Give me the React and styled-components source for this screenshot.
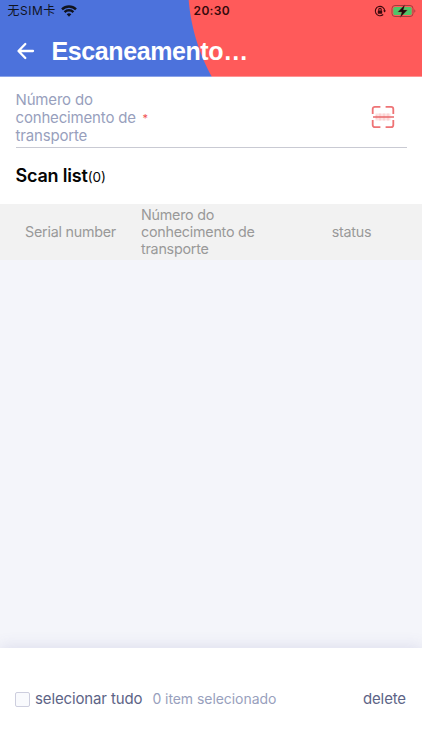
import React from 'react';
import styled, { createGlobalStyle } from 'styled-components';

const GlobalStyle = createGlobalStyle`
  * { box-sizing: border-box; }
  body { margin: 0; font-family: Inter, "Noto Sans CJK SC", sans-serif; }
`;

const Screen = styled.div`
  width: 422px;
  height: 750px;
  display: flex;
  flex-direction: column;
  background: #f4f5fa;
  overflow: hidden;
`;

const Header = styled.header`
  height: 77px;
  flex: none;
  background: radial-gradient(circle 193px at 381px -16px, #ff5a5a 192.5px, #4c72dc 193.5px);
  box-shadow: inset 0 -1px 0 rgba(255, 255, 255, 0.35);
`;

const StatusBar = styled.div`
  height: 22px;
  display: grid;
  grid-template-columns: 1fr auto 1fr;
  align-items: center;
  padding: 0 6px 0 7.5px;
  color: #10131f;
`;

const Carrier = styled.div`
  display: flex;
  align-items: center;
  font-size: 12px;
  line-height: 22px;
  gap: 5px;
  white-space: nowrap;
`;

const CarrierName = styled.span`
  letter-spacing: 0.5px;
`;

const Clock = styled.div`
  font-size: 12px;
  font-weight: 600;
  line-height: 22px;
  letter-spacing: 0.3px;
  color: #35090c;
`;

const Indicators = styled.div`
  display: flex;
  justify-content: flex-end;
  align-items: center;
  gap: 5px;
`;

const TitleBar = styled.div`
  height: 54px;
  display: flex;
  align-items: center;
  padding: 4px 16px 0;
  gap: 15.5px;
`;

const Title = styled.h1`
  margin: 0;
  font: bold 25px/30px "Liberation Sans", sans-serif;
  letter-spacing: -0.4px;
  color: #fff;
`;

const Panel = styled.section`
  height: 127px;
  flex: none;
  padding: 0 15.5px;
  background: #fff;
`;

const Field = styled.div`
  height: 71px;
  display: flex;
  align-items: center;
  justify-content: space-between;
  padding: 11px 11.5px 0 0;
  border-bottom: 1px solid #c9cad3;
`;

const Label = styled.div`
  display: flex;
  align-items: center;
  color: #989fbd;
  font-size: 15px;
  line-height: 18px;
  letter-spacing: -0.17px;
`;

const LabelText = styled.span`
  width: 127px;
  white-space: pre-line;
`;

const Required = styled.span`
  color: #f0514f;
  font-size: 11px;
  padding-top: 1px;
`;

const ScanButton = styled.div`
  display: flex;
  padding-bottom: 1px;
`;

const ListTitle = styled.h2`
  display: flex;
  align-items: baseline;
  margin: 0;
  padding-top: 16px;
  font-size: 18px;
  font-weight: 600;
  line-height: 24px;
  letter-spacing: -0.2px;
  color: #050505;
`;

const Count = styled.span`
  font-size: 13.5px;
  font-weight: 400;
  letter-spacing: 0;
`;

const TableHead = styled.div`
  height: 56px;
  flex: none;
  display: grid;
  grid-template-columns: 141px 140px 141px;
  align-items: center;
  padding-bottom: 2px;
  background: #f2f2f2;
  color: #999;
  font-size: 14.3px;
  line-height: 17px;
  letter-spacing: -0.23px;
`;

const HeadCell = styled.div`
  text-align: ${(p) => p.$align || 'center'};
  white-space: pre-line;
`;

const Rows = styled.main`
  flex: 1;
`;

const Footer = styled.footer`
  height: 102px;
  flex: none;
  display: flex;
  align-items: center;
  padding: 0 16px 0 15px;
  background: #fff;
  box-shadow: 0 -2px 14px rgba(90, 95, 160, 0.14);
  color: #5d6486;
  font-size: 15px;
  line-height: 20px;
  letter-spacing: -0.13px;
`;

const Checkbox = styled.span`
  width: 15px;
  height: 15px;
  margin-right: 5px;
  border: 1px solid #cdcede;
  border-radius: 2px;
  background: #f9fafd;
`;

const Selected = styled.span`
  margin-left: 10px;
  font-size: 14px;
  letter-spacing: -0.06px;
  color: #989fbd;
`;

const SelectAll = styled.span``;

const Delete = styled.span`
  margin-left: auto;
`;

const WifiIcon = () => (
  <svg width="16" height="12" viewBox="0 0 16 12" fill="none" stroke="#10131f" strokeWidth="2.4">
    <path d="M1 4.3a10 10 0 0 1 14 0" />
    <path d="M3.6 7.1a6.2 6.2 0 0 1 8.8 0" />
    <path d="M8 11.7 5.7 9.3a3.3 3.3 0 0 1 4.6 0z" fill="#10131f" stroke="none" />
  </svg>
);

const LockIcon = () => (
  <svg width="12" height="12" viewBox="0 0 12 12" fill="none" stroke="#3b080c" strokeWidth="1.1">
    <path d="M9.2 9.5A4.7 4.7 0 1 1 10.7 6" />
    <path d="m9 5.5 1.7 2 1.2-2z" fill="#3b080c" stroke="none" />
    <path d="M4.8 5.7V4.5a1.2 1.2 0 0 1 2.4 0v1.2" />
    <rect x="3.8" y="5.4" width="4.4" height="3.3" rx=".5" fill="#3b080c" stroke="none" />
  </svg>
);

const BatteryIcon = () => (
  <svg width="25" height="14" viewBox="0 0 25 14">
    <rect x="1" y="1.5" width="21" height="11" rx="3" fill="none" stroke="#a53c3e" />
    <rect x="2.3" y="2.9" width="18.4" height="8.2" rx="1.6" fill="#4fc568" />
    <path d="M23.3 5.2v3.6c1.4-.6 1.4-3 0-3.6" fill="#a53c3e" />
    <path d="m13.8.8-7 7.2h4l-1.6 5.5 7.2-7.6h-4z" fill="#1b0a0a" stroke="#ae4c43" strokeWidth=".3" />
  </svg>
);

const BackIcon = () => (
  <svg width="20" height="20" viewBox="0 0 20 20" fill="none" stroke="#fff" strokeWidth="2.3" strokeLinecap="round" strokeLinejoin="round">
    <path d="M17 10H3M9.3 3 2.5 10l6.8 7" />
  </svg>
);

const ScanIcon = () => (
  <svg width="24" height="24" viewBox="0 0 24 24" fill="none" stroke="#ee7375" strokeWidth="1.8">
    <path d="M4.5 12h15" stroke="#fde3e3" strokeWidth="7" />
    <path d="M5.5 10v4M9 8.5v7M13 8.5v7M17 8.5v7" stroke="#fbd0d0" strokeWidth="1.5" />
    <path d="M1.7 9V4a2.2 2.2 0 0 1 2.2-2.2h5.5M14.6 1.8h5.5A2.2 2.2 0 0 1 22.3 4v5M22.3 15v5a2.2 2.2 0 0 1-2.2 2.2h-5.5M9.4 22.2H3.9A2.2 2.2 0 0 1 1.7 20v-5" />
    <path d="M2 12h21" stroke="#e8686b" strokeWidth="1.5" />
  </svg>
);

export default function App() {
  return (
    <>
      <GlobalStyle />
      <Screen>
        <Header>
          <StatusBar>
            <Carrier>
              <CarrierName>无SIM卡</CarrierName>
              <WifiIcon />
            </Carrier>
            <Clock>20:30</Clock>
            <Indicators>
              <LockIcon />
              <BatteryIcon />
            </Indicators>
          </StatusBar>
          <TitleBar>
            <BackIcon />
            <Title>Escaneamento…</Title>
          </TitleBar>
        </Header>
        <Panel>
          <Field>
            <Label>
              <LabelText>{'Número do\nconhecimento de\ntransporte'}</LabelText>
              <Required>*</Required>
            </Label>
            <ScanButton>
              <ScanIcon />
            </ScanButton>
          </Field>
          <ListTitle>
            Scan list<Count>(0)</Count>
          </ListTitle>
        </Panel>
        <TableHead>
          <HeadCell>Serial number</HeadCell>
          <HeadCell $align="left">{'Número do\nconhecimento de\ntransporte'}</HeadCell>
          <HeadCell>status</HeadCell>
        </TableHead>
        <Rows />
        <Footer>
          <Checkbox />
          <SelectAll>selecionar tudo</SelectAll>
          <Selected>0 item selecionado</Selected>
          <Delete>delete</Delete>
        </Footer>
      </Screen>
    </>
  );
}
